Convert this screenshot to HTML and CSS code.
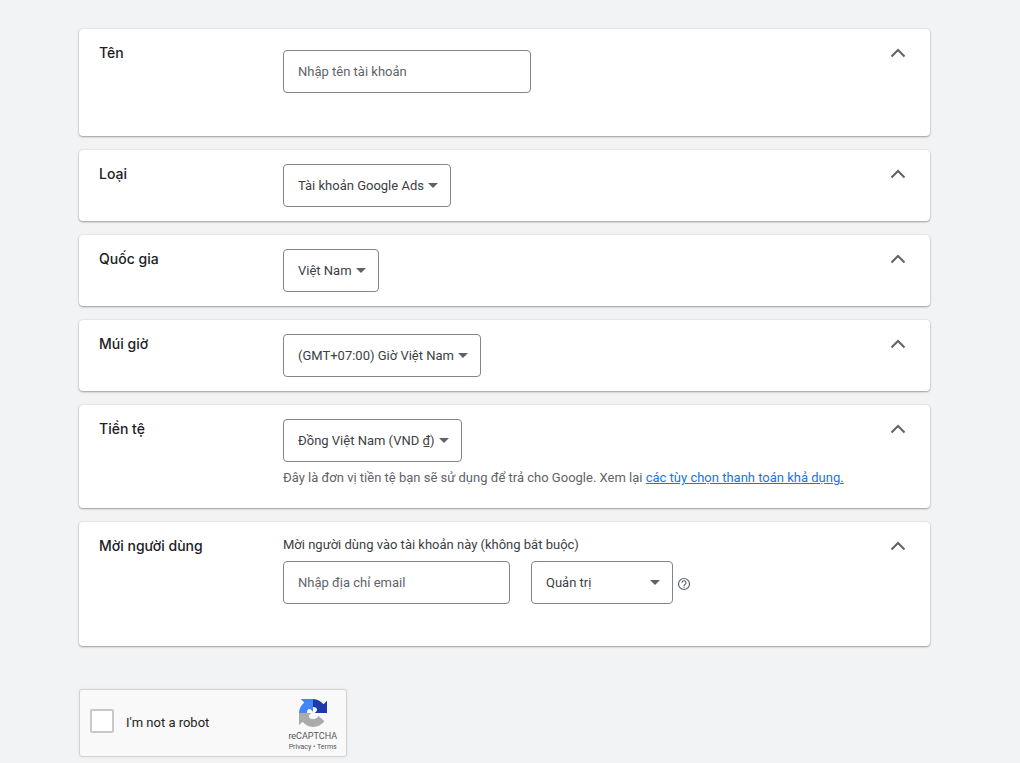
FILE: index.html
```html
<!DOCTYPE html>
<html lang="vi">
<head>
<meta charset="utf-8">
<meta name="viewport" content="width=device-width, initial-scale=1">
<title>Tạo tài khoản</title>
<link rel="stylesheet" href="styles.css">
</head>
<body>
<svg class="sprite" aria-hidden="true">
  <symbol id="chevron" viewBox="0 0 16 10"><path d="M1.500 8.500 8 2l6.500 6.500" fill="none" stroke="currentColor" stroke-width="2"/></symbol>
  <symbol id="caret" viewBox="0 0 10 5"><path d="M0 0h10L5 5z" fill="currentColor"/></symbol>
</svg>
<main class="page">
  <form class="form">
    <section class="card card-name">
      <label class="card-title" for="name">Tên</label>
      <div class="card-body">
        <input class="box input-name" id="name" type="text" placeholder="Nhập tên tài khoản">
      </div>
      <button class="toggle" type="button" aria-label="Thu gọn Tên"><svg><use href="#chevron"/></svg></button>
    </section>

    <section class="card">
      <label class="card-title" for="type">Loại</label>
      <div class="card-body">
        <div class="select"><select class="box" id="type"><option>Tài khoản Google Ads</option></select><svg class="caret"><use href="#caret"/></svg></div>
      </div>
      <button class="toggle" type="button" aria-label="Thu gọn Loại"><svg><use href="#chevron"/></svg></button>
    </section>

    <section class="card">
      <label class="card-title" for="country">Quốc gia</label>
      <div class="card-body">
        <div class="select"><select class="box" id="country"><option>Việt Nam</option></select><svg class="caret"><use href="#caret"/></svg></div>
      </div>
      <button class="toggle" type="button" aria-label="Thu gọn Quốc gia"><svg><use href="#chevron"/></svg></button>
    </section>

    <section class="card">
      <label class="card-title" for="zone">Múi giờ</label>
      <div class="card-body">
        <div class="select"><select class="box" id="zone"><option>(GMT+07:00) Giờ Việt Nam</option></select><svg class="caret"><use href="#caret"/></svg></div>
      </div>
      <button class="toggle" type="button" aria-label="Thu gọn Múi giờ"><svg><use href="#chevron"/></svg></button>
    </section>

    <section class="card card-currency">
      <label class="card-title" for="currency">Tiền tệ</label>
      <div class="card-body">
        <div class="select"><select class="box" id="currency"><option>Đồng Việt Nam (VND ₫)</option></select><svg class="caret"><use href="#caret"/></svg></div>
        <p class="hint">Đây là đơn vị tiền tệ bạn sẽ sử dụng để trả cho Google. Xem lại <a href="#">các tùy chọn thanh toán khả dụng.</a></p>
      </div>
      <button class="toggle" type="button" aria-label="Thu gọn Tiền tệ"><svg><use href="#chevron"/></svg></button>
    </section>

    <section class="card card-invite">
      <h2 class="card-title">Mời người dùng</h2>
      <div class="card-body">
        <label class="invite-label" for="email">Mời người dùng vào tài khoản này (không bắt buộc)</label>
        <div class="invite-row">
          <input class="box input-email" id="email" type="email" placeholder="Nhập địa chỉ email">
          <div class="role">
            <div class="select select-role"><select class="box" aria-label="Cấp truy cập"><option>Quản trị</option></select><svg class="caret"><use href="#caret"/></svg></div>
            <button class="help" type="button" aria-label="Trợ giúp">
              <svg viewBox="0 0 14 14"><circle cx="7" cy="7" r="5.500" fill="none" stroke="currentColor" stroke-width="1.200"/><path d="M5 5.700a2 2 0 1 1 3.200 1.600C7.400 7.900 7 8.100 7 9" fill="none" stroke="currentColor" stroke-width="1.100"/><circle cx="7" cy="10.300" r=".7" fill="currentColor"/></svg>
            </button>
          </div>
        </div>
      </div>
      <button class="toggle" type="button" aria-label="Thu gọn Mời người dùng"><svg><use href="#chevron"/></svg></button>
    </section>

    <div class="captcha">
      <input class="captcha-check" id="robot" type="checkbox">
      <label class="captcha-label" for="robot" lang="en">I'm not a robot</label>
      <div class="captcha-brand" lang="en">
        <svg class="captcha-logo" viewBox="0 0 64 64" aria-hidden="true">
          <path fill="#1c3aa9" d="M64 32V4l-8 8C50 5 42 0 32 0v18c5 0 8 2 9 5 1 2 0 4-2 6l-3 3z"/>
          <path fill="#4285f4" d="M32 0H4l8 8C5 14 0 22 0 32h18c0-5 2-8 5-9 3 0 4 1 6 3l3 3z"/>
          <path fill="#ababab" d="M0 32v28l8-8c6 7 14 12 24 12 11 0 20-5 26-13L45 39c-3 4-7 7-13 7-5 0-8-2-9-5-1-2 0-4 2-6l3-3z"/>
        </svg>
        <span class="captcha-name">reCAPTCHA</span>
        <span class="captcha-links"><a href="#">Privacy</a> • <a href="#">Terms</a></span>
      </div>
    </div>
  </form>
</main>
</body>
</html>
```
FILE: styles.css
```css
* { box-sizing: border-box; }

body {
  margin: 0;
  background: #f1f3f4;
  color: #3c4043;
  font: 13px/20px Roboto, "Noto Sans", sans-serif;
}

.sprite { display: none; }

.page { padding: 29px 90px 6px 79px; }

.form {
  display: flex;
  flex-direction: column;
  gap: 14px;
}

.card {
  display: flex;
  align-items: flex-start;
  padding: 14px 24px 14px 20px;
  background: #fff;
  border-radius: 4px;
  box-shadow: 0 1px 2px rgba(60, 64, 67, .45), 0 0 2px rgba(60, 64, 67, .15);
}

.card-name { padding-bottom: 43px; }
.card-name .card-body { padding-top: 7px; }
.card-currency { padding-bottom: 20px; }
.card-invite { padding-bottom: 42px; }

.card-title {
  flex: 0 0 184px;
  margin: 0;
  color: #202124;
  font: 500 14px/20px Inter, "Noto Sans", sans-serif;
}

.card-body {
  flex: 1;
  min-width: 0;
}

.box {
  height: 43px;
  padding: 0 14px;
  border: 1px solid #80868b;
  border-radius: 4px;
  background: #fff;
  color: #3c4043;
  font: inherit;
}

.box::placeholder {
  color: #5f6368;
  opacity: 1;
}

.input-name, .input-email { display: block; max-width: 100%; }
.input-name { width: 248px; }
.input-email { width: 227px; }

.select {
  display: grid;
  width: fit-content;
  align-items: center;
}

.select > * { grid-area: 1 / 1; }

.select select {
  width: 100%;
  padding-right: 26px;
  appearance: none;
}

.caret {
  width: 10px;
  height: 5px;
  margin-right: 13px;
  justify-self: end;
  color: #5f6368;
  pointer-events: none;
}

.select-role { width: 142px; }

.toggle, .help {
  display: flex;
  padding: 0;
  border: 0;
  background: none;
  color: #5f6368;
}

.toggle { padding: 5px 0; }
.toggle svg { width: 16px; height: 10px; }

.hint {
  margin: 6px 0 0;
  color: #5f6368;
}

.hint a { color: #1a73e8; }

.invite-label {
  display: block;
  margin-bottom: 7px;
  line-height: 18px;
}

.invite-row {
  display: flex;
  flex-wrap: wrap;
  gap: 21px;
}

.role {
  display: flex;
  align-items: center;
  gap: 4px;
}

.help { padding-top: 2px; }
.help svg { width: 14px; height: 14px; }

.captcha {
  display: flex;
  align-items: center;
  width: 268px;
  height: 68px;
  margin-top: 29px;
  padding: 0 9px 0 10px;
  border: 1px solid #d3d3d3;
  border-radius: 3px;
  background: #f9f9f9;
  box-shadow: 0 0 3px rgba(0, 0, 0, .08);
}

.captcha-check {
  width: 24px;
  height: 24px;
  margin: 0 12px 4px 0;
  border: 2px solid #c8c8c8;
  border-radius: 2px;
  background: #fff;
  appearance: none;
}

.captcha-label {
  flex: 1;
  color: #222;
}

.captcha-brand {
  display: flex;
  flex-direction: column;
  align-items: center;
  padding-top: 4px;
  color: #555;
}

.captcha-logo { width: 28px; height: 28px; margin-bottom: 3px; }
.captcha-name { font-size: 9px; line-height: 12px; }
.captcha-links { font-size: 7px; line-height: 10px; }
.captcha-links a { color: inherit; text-decoration: none; }
```
